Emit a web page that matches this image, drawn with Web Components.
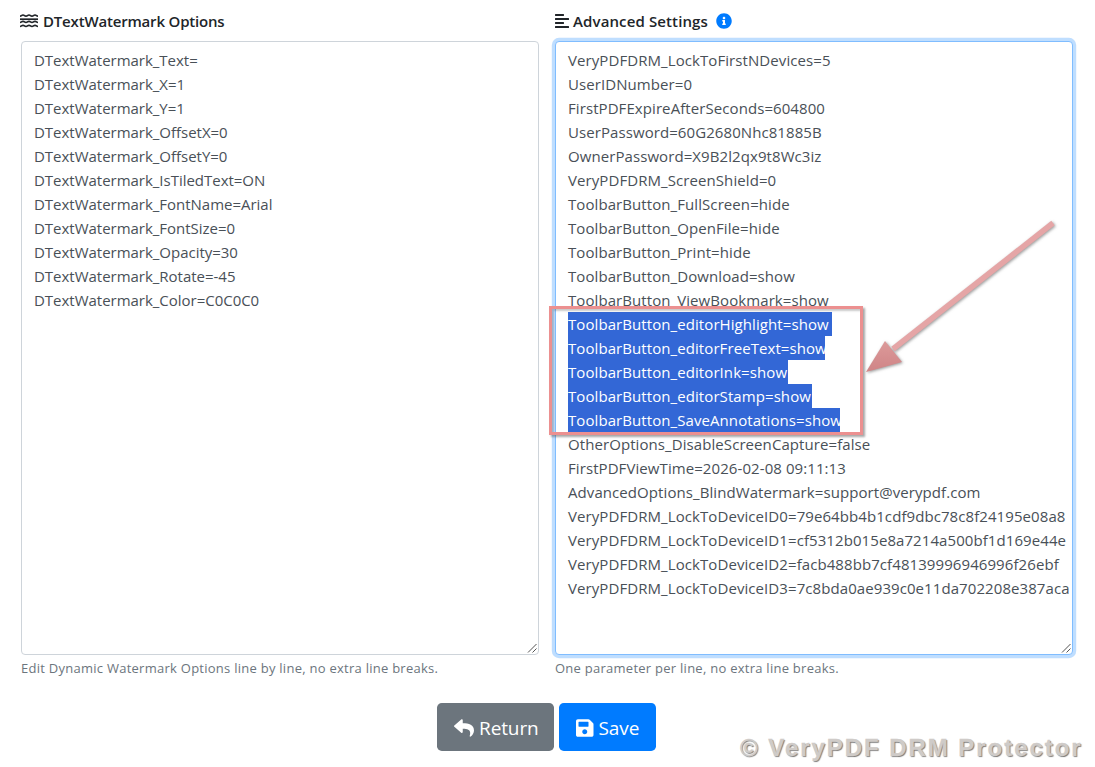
<!doctype html>
<html>
<head>
<meta charset="utf-8">
<title>Options</title>
<style>
  html, body { margin: 0; padding: 0; background: #fff; }
  body { font: 16px/24px "Open Sans", "Noto Sans", sans-serif; color: #212529; overflow: hidden; }
</style>
</head>
<body>
<dp-page>
  <dp-field style="--label-ls:-.18px;--text-ls:-.02px">
    <svg slot="icon" style="margin-left:-1px;margin-right:5px" width="18" height="14" viewBox="0 0 18 14" fill="none" stroke="#212529" stroke-width="1.7"><path d="M0 2.200c1.500 0 1.500-1.200 3-1.200s1.500 1.200 3 1.200 1.500-1.200 3-1.200 1.500 1.200 3 1.200 1.500-1.200 3-1.200 1.500 1.200 3 1.200"/><path d="M0 5.200h18"/><path d="M0 8.500c1.500 0 1.500-1.200 3-1.200s1.500 1.200 3 1.200 1.500-1.200 3-1.200 1.500 1.200 3 1.200 1.500-1.200 3-1.200 1.500 1.200 3 1.200"/><path d="M0 12.500c1.500 0 1.500-1.200 3-1.200s1.500 1.200 3 1.200 1.500-1.200 3-1.200 1.500 1.200 3 1.200 1.500-1.200 3-1.200 1.500 1.200 3 1.200"/></svg>
    <span slot="label">DTextWatermark Options</span>
    <dp-editor>
      <div>DTextWatermark_Text=</div>
      <div>DTextWatermark_X=1</div>
      <div>DTextWatermark_Y=1</div>
      <div>DTextWatermark_OffsetX=0</div>
      <div>DTextWatermark_OffsetY=0</div>
      <div>DTextWatermark_IsTiledText=ON</div>
      <div>DTextWatermark_FontName=Arial</div>
      <div>DTextWatermark_FontSize=0</div>
      <div>DTextWatermark_Opacity=30</div>
      <div>DTextWatermark_Rotate=-45</div>
      <div>DTextWatermark_Color=C0C0C0</div>
    </dp-editor>
    <span slot="hint">Edit Dynamic Watermark Options line by line, no extra line breaks.</span>
  </dp-field>
  <dp-field style="--label-ls:.12px;--text-ls:.08px">
    <svg slot="icon" width="14" height="16" viewBox="0 0 448 512" fill="#212529"><path d="M12.83 352h262.34A12.82 12.82 0 0 0 288 339.17v-38.34A12.82 12.82 0 0 0 275.17 288H12.83A12.82 12.82 0 0 0 0 300.83v38.34A12.82 12.82 0 0 0 12.83 352zm0-256h262.34A12.82 12.82 0 0 0 288 83.17V44.83A12.82 12.82 0 0 0 275.17 32H12.83A12.82 12.82 0 0 0 0 44.83v38.34A12.82 12.82 0 0 0 12.83 96zM432 160H16a16 16 0 0 0-16 16v32a16 16 0 0 0 16 16h416a16 16 0 0 0 16-16v-32a16 16 0 0 0-16-16zm0 256H16a16 16 0 0 0-16 16v32a16 16 0 0 0 16 16h416a16 16 0 0 0 16-16v-32a16 16 0 0 0-16-16z"/></svg>
    <span slot="label">Advanced Settings</span>
    <svg slot="after" width="16" height="16" viewBox="0 0 512 512" fill="#007bff"><path d="M256 8C119.043 8 8 119.083 8 256c0 136.997 111.043 248 248 248s248-111.003 248-248C504 119.083 392.957 8 256 8zm0 110c23.196 0 42 18.804 42 42s-18.804 42-42 42-42-18.804-42-42 18.804-42 42-42zm56 254c0 6.627-5.373 12-12 12h-88c-6.627 0-12-5.373-12-12v-24c0-6.627 5.373-12 12-12h12v-64h-12c-6.627 0-12-5.373-12-12v-24c0-6.627 5.373-12 12-12h64c6.627 0 12 5.373 12 12v100h12c6.627 0 12 5.373 12 12v24z"/></svg>
    <dp-editor focused>
      <div>VeryPDFDRM_LockToFirstNDevices=5</div>
      <div>UserIDNumber=0</div>
      <div>FirstPDFExpireAfterSeconds=604800</div>
      <div>UserPassword=60G2680Nhc81885B</div>
      <div>OwnerPassword=X9B2l2qx9t8Wc3iz</div>
      <div>VeryPDFDRM_ScreenShield=0</div>
      <div>ToolbarButton_FullScreen=hide</div>
      <div>ToolbarButton_OpenFile=hide</div>
      <div>ToolbarButton_Print=hide</div>
      <div>ToolbarButton_Download=show</div>
      <div>ToolbarButton_ViewBookmark=show</div>
      <div class="sel" style="width:264px">ToolbarButton_editorHighlight=show</div>
      <div class="sel" style="width:257px">ToolbarButton_editorFreeText=show</div>
      <div class="sel" style="width:220px">ToolbarButton_editorInk=show</div>
      <div class="sel" style="width:244px">ToolbarButton_editorStamp=show</div>
      <div class="sel" style="width:272px">ToolbarButton_SaveAnnotations=show</div>
      <div>OtherOptions_DisableScreenCapture=false</div>
      <div>FirstPDFViewTime=2026-02-08 09:11:13</div>
      <div>AdvancedOptions_BlindWatermark=support@verypdf.com</div>
      <div>VeryPDFDRM_LockToDeviceID0=79e64bb4b1cdf9dbc78c8f24195e08a8</div>
      <div>VeryPDFDRM_LockToDeviceID1=cf5312b015e8a7214a500bf1d169e44e</div>
      <div>VeryPDFDRM_LockToDeviceID2=facb488bb7cf48139996946996f26ebf</div>
      <div>VeryPDFDRM_LockToDeviceID3=7c8bda0ae939c0e11da702208e387aca</div>
    </dp-editor>
    <span slot="hint">One parameter per line, no extra line breaks.</span>
  </dp-field>
  <dp-button slot="actions" kind="secondary" style="width:117px">
    <svg slot="icon" width="20" height="20" viewBox="0 0 512 512" fill="currentColor"><path d="M8.309 189.836L184.313 37.851C199.719 24.546 224 35.347 224 56.015v80.053c160.629 1.839 288 34.032 288 186.258 0 61.441-39.581 122.309-83.333 154.132-13.653 9.931-33.111-2.533-28.077-18.631 45.344-145.012-21.507-183.51-176.59-185.742V360c0 20.7-24.3 31.453-39.687 18.164l-176.004-152c-11.071-9.562-11.086-26.753 0-36.328z"/></svg>
    Return
  </dp-button>
  <dp-button slot="actions" kind="primary" style="width:97px">
    <svg slot="icon" width="17.500" height="20" viewBox="0 0 448 512" fill="currentColor"><path d="M433.941 129.941l-83.882-83.882A48 48 0 0 0 316.118 32H48C21.490 32 0 53.490 0 80v352c0 26.510 21.490 48 48 48h352c26.510 0 48-21.490 48-48V163.882a48 48 0 0 0-14.059-33.941zM224 416c-35.346 0-64-28.654-64-64 0-35.346 28.654-64 64-64s64 28.654 64 64c0 35.346-28.654 64-64 64zm96-304.520V212c0 6.627-5.373 12-12 12H76c-6.627 0-12-5.373-12-12V108c0-6.627 5.373-12 12-12h228.520c3.183 0 6.235 1.264 8.485 3.515l3.480 3.480A11.996 11.996 0 0 1 320 111.480z"/></svg>
    Save
  </dp-button>
  <dp-callout slot="overlay"></dp-callout>
  <dp-watermark slot="overlay">© VeryPDF DRM Protector</dp-watermark>
</dp-page>
<script>
function define(name, css, html) {
  customElements.define(name, class extends HTMLElement {
    connectedCallback() {
      if (this.shadowRoot) return;
      this.attachShadow({ mode: "open" }).innerHTML = `<style>${css}</style>${html}`;
    }
  });
}

define("dp-page", `
  :host { display: block; position: relative; width: 1095px; height: 767px; overflow: hidden; }
  .cols { display: grid; grid-template-columns: 518px 518px; gap: 16px; padding: 9px 22px 0 21px; }
  .actions { display: flex; justify-content: center; gap: 5px; margin-top: 25px; padding: 0 23px 0 21px; }
`, `<div class="cols"><slot></slot></div><div class="actions"><slot name="actions"></slot></div><slot name="overlay"></slot>`);

define("dp-field", `
  :host { display: block; }
  .label { display: flex; align-items: center; height: 24px; margin-bottom: 8px; font-weight: 600; font-size: 15px; letter-spacing: var(--label-ls, 0); color: #212529; }
  ::slotted([slot=icon]) { margin-right: 4px; }
  ::slotted([slot=after]) { margin-left: 8px; }
  .hint { margin-top: 4px; font-size: 13px; line-height: 19px; letter-spacing: .26px; color: #6c757d; }
`, `<div class="label"><slot name="icon"></slot><slot name="label"></slot><slot name="after"></slot></div><slot></slot><div class="hint"><slot name="hint"></slot></div>`);

define("dp-editor", `
  :host { display: block; box-sizing: border-box; position: relative; height: 614px; padding: 6px 12px; overflow: hidden;
    background: #fff; border: 1px solid #ced4da; border-radius: 4px; color: #495057; font-size: 15px; line-height: 24px; letter-spacing: var(--text-ls, 0); }
  :host([focused]) { border-color: #80bdff; box-shadow: 0 0 0 3.200px rgba(0,123,255,.25); }
  ::slotted(div) { white-space: pre; }
  ::slotted(.sel) { background: #3367d6; color: #fff; }
  svg { position: absolute; right: 1px; bottom: 1px; }
`, `<slot></slot><svg width="10" height="10" viewBox="0 0 10 10" stroke="#555" fill="none"><path d="M1 9.500 9.500 1M5.500 9.500 9.500 5.500"/></svg>`);

define("dp-button", `
  :host { display: inline-flex; align-items: center; gap: 5px; box-sizing: border-box; height: 48px; padding: 2px 0 0 17px; border-radius: 4.800px; color: #fff; font-size: 19px; letter-spacing: -.1px; }
  :host([kind=secondary]) { background: #6c757d; }
  :host([kind=primary]) { background: #007bff; }
`, `<slot name="icon"></slot><slot></slot>`);

define("dp-callout", `
  :host { display: block; position: absolute; inset: 0; pointer-events: none; }
  .box { position: absolute; left: 549px; top: 306px; box-sizing: border-box; width: 314px; height: 129px; border: 3px solid #ec9090;
    box-shadow: 2px 2px 2px rgba(80,80,80,.5), inset 2px 2px 2px rgba(80,80,80,.3); }
  svg { position: absolute; left: 850px; top: 210px; overflow: visible; filter: drop-shadow(1.500px 1.500px 1.500px rgba(70,70,70,.55)); }
`, `<div class="box"></div><svg width="230" height="180" viewBox="850 210 230 180">
  <defs><linearGradient id="head" x1="0" y1="0" x2="0" y2="1"><stop offset="0" stop-color="#dc9a9a"/><stop offset="1" stop-color="#cf8486"/></linearGradient></defs>
  <path d="M1053 223 893 349" stroke="#e5a5a6" stroke-width="5.500" fill="none"/>
  <path d="M885 341 902 362 866 372z" fill="url(#head)"/>
</svg>`);

define("dp-watermark", `
  :host { position: absolute; left: 740px; top: 734px; font: bold 24px/28px "Liberation Sans", sans-serif; letter-spacing: 1.950px; color: #cfcbc8; -webkit-text-stroke: .3px #cfcbc8; text-shadow: 1px 1px 1px #777; white-space: nowrap; }
`, `<slot></slot>`);
</script>
</body>
</html>
